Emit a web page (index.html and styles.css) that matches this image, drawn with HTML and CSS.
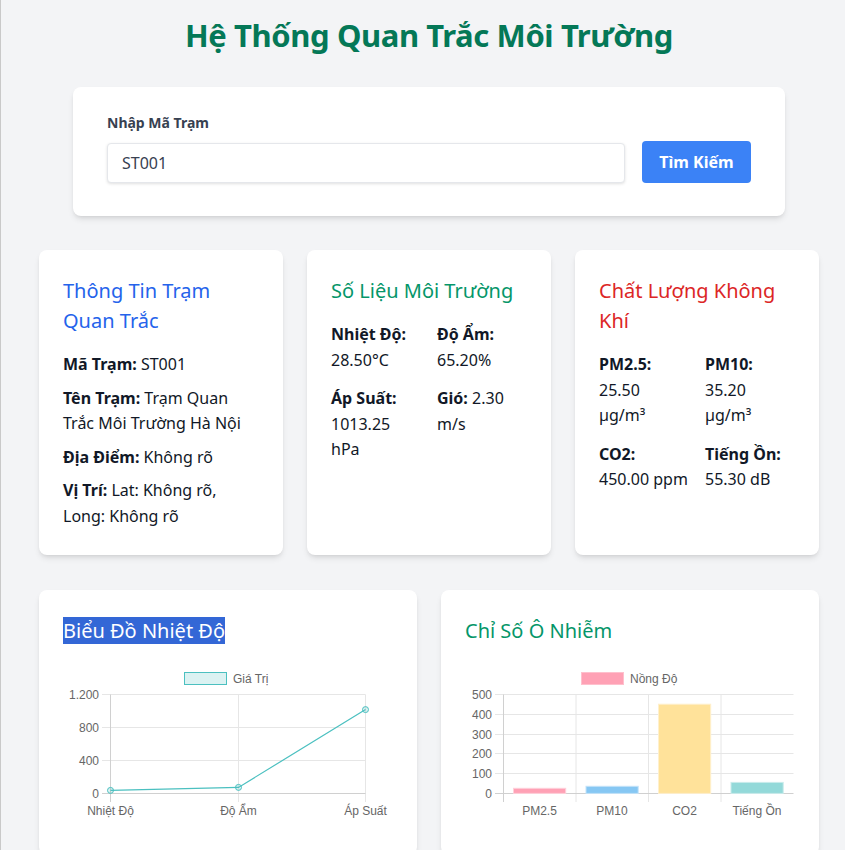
FILE: index.html
```html
<!DOCTYPE html>
<html lang="vi">
<head>
<meta charset="utf-8">
<title>Hệ Thống Quan Trắc Môi Trường</title>
<link rel="stylesheet" href="styles.css">
</head>
<body>
<main class="page">
  <h1 class="title">Hệ Thống Quan Trắc Môi Trường</h1>

  <section class="search-card">
    <div class="search-row">
      <div class="search-field">
        <label class="search-label" for="station">Nhập Mã Trạm</label>
        <input class="search-input" id="station" type="text" value="ST001">
      </div>
      <button class="search-btn" type="button">Tìm Kiếm</button>
    </div>
  </section>

  <section class="info-grid">
    <div class="card">
      <h2 class="card-title blue">Thông Tin Trạm Quan Trắc</h2>
      <div class="info-list">
        <p><b>Mã Trạm:</b> ST001</p>
        <p><b>Tên Trạm:</b> Trạm Quan Trắc Môi Trường Hà Nội</p>
        <p><b>Địa Điểm:</b> Không rõ</p>
        <p><b>Vị Trí:</b> Lat: Không rõ, Long: Không rõ</p>
      </div>
    </div>
    <div class="card">
      <h2 class="card-title green">Số Liệu Môi Trường</h2>
      <div class="metric-grid">
        <div><b>Nhiệt Độ:</b> 28.50°C</div>
        <div><b>Độ Ẩm:</b> 65.20%</div>
        <div><b>Áp Suất:</b> 1013.25 hPa</div>
        <div><b>Gió:</b> 2.30 m/s</div>
      </div>
    </div>
    <div class="card">
      <h2 class="card-title red">Chất Lượng Không Khí</h2>
      <div class="metric-grid">
        <div><b>PM2.5:</b> 25.50 µg/m³</div>
        <div><b>PM10:</b> 35.20 µg/m³</div>
        <div><b>CO2:</b> 450.00 ppm</div>
        <div><b>Tiếng Ồn:</b> 55.30 dB</div>
      </div>
    </div>
  </section>

  <section class="chart-grid">
    <div class="card">
      <h2 class="card-title chart-title"><span class="selected">Biểu Đồ Nhiệt Độ</span></h2>
      <svg class="chart" width="328" height="165" viewBox="0 0 328 165">
        <rect x="121.5" y="7.5" width="42" height="12" fill="rgba(75,192,192,0.2)" stroke="rgb(75,192,192)" stroke-width="1"/>
        <text class="lbl" x="170" y="17.5">Giá Trị</text>
        <g stroke="#e6e6e6" stroke-width="1">
          <line x1="39" y1="29.5" x2="302.5" y2="29.5"/>
          <line x1="39" y1="62.5" x2="302.5" y2="62.5"/>
          <line x1="39" y1="95.5" x2="302.5" y2="95.5"/>
          <line x1="175.5" y1="29.5" x2="175.5" y2="137"/>
          <line x1="302.5" y1="29.5" x2="302.5" y2="137"/>
        </g>
        <g stroke="#d0d0d0" stroke-width="1">
          <line x1="39" y1="128.5" x2="302.5" y2="128.5"/>
          <line x1="47.5" y1="29.5" x2="47.5" y2="137"/>
        </g>
        <g class="lbl" text-anchor="end">
          <text x="36" y="33.5">1.200</text>
          <text x="36" y="66.5">800</text>
          <text x="36" y="99.5">400</text>
          <text x="36" y="132.5">0</text>
        </g>
        <g class="lbl" text-anchor="middle">
          <text x="47.5" y="150">Nhiệt Độ</text>
          <text x="175.5" y="150">Độ Ẩm</text>
          <text x="302.5" y="150">Áp Suất</text>
        </g>
        <polyline points="47.5,125.4 175.5,122.4 302.5,44.6" fill="none" stroke="rgb(75,192,192)" stroke-width="1.2"/>
        <g fill="rgba(75,192,192,0.2)" stroke="rgb(75,192,192)" stroke-width="1">
          <circle cx="47.5" cy="125.4" r="3"/>
          <circle cx="175.5" cy="122.4" r="3"/>
          <circle cx="302.5" cy="44.6" r="3"/>
        </g>
      </svg>
    </div>
    <div class="card">
      <h2 class="card-title green chart-title">Chỉ Số Ô Nhiễm</h2>
      <svg class="chart" width="330" height="165" viewBox="0 0 330 165">
        <rect x="116.5" y="7.5" width="42" height="12" fill="#ffa1b5" stroke="#ffc0cd" stroke-width="1"/>
        <text class="lbl" x="165" y="17.5">Nồng Độ</text>
        <g stroke="#e6e6e6" stroke-width="1">
          <line x1="30" y1="29.5" x2="328.5" y2="29.5"/>
          <line x1="30" y1="49.5" x2="328.5" y2="49.5"/>
          <line x1="30" y1="69.5" x2="328.5" y2="69.5"/>
          <line x1="30" y1="88.5" x2="328.5" y2="88.5"/>
          <line x1="30" y1="108.5" x2="328.5" y2="108.5"/>
          <line x1="111" y1="29.5" x2="111" y2="137"/>
          <line x1="183.5" y1="29.5" x2="183.5" y2="137"/>
          <line x1="256" y1="29.5" x2="256" y2="137"/>
        </g>
        <g stroke="#d0d0d0" stroke-width="1">
          <line x1="30" y1="128.5" x2="328.5" y2="128.5"/>
          <line x1="38.5" y1="29.5" x2="38.5" y2="137"/>
        </g>
        <g class="lbl" text-anchor="end">
          <text x="27" y="33.5">500</text>
          <text x="27" y="53.5">400</text>
          <text x="27" y="73.5">300</text>
          <text x="27" y="92.5">200</text>
          <text x="27" y="112.5">100</text>
          <text x="27" y="132.5">0</text>
        </g>
        <rect x="48.5" y="123.3" width="52.2" height="5.1" fill="#ffa1b5" stroke="#ffd0da" stroke-width="1"/>
        <rect x="121" y="121.3" width="52.2" height="7.1" fill="#86c7f3" stroke="#c3e3f9" stroke-width="1"/>
        <rect x="193.5" y="39.2" width="52.2" height="89.2" fill="#ffe29a" stroke="#fff0cc" stroke-width="1"/>
        <rect x="266" y="117.4" width="52.2" height="11" fill="#93d9d9" stroke="#c9ecec" stroke-width="1"/>
        <g class="lbl" text-anchor="middle">
          <text x="74.5" y="150">PM2.5</text>
          <text x="147" y="150">PM10</text>
          <text x="219.5" y="150">CO2</text>
          <text x="292" y="150">Tiếng Ồn</text>
        </g>
      </svg>
    </div>
  </section>
</main>
</body>
</html>
```

FILE: styles.css
```css
html, body {
  margin: 0;
}

body {
  background: #f3f4f6;
  border-left: 1px solid #c9c9c9;
  min-height: 100vh;
  box-sizing: border-box;
  font-family: "Noto Sans", "Open Sans", sans-serif;
  color: #111827;
}

.page {
  padding: 15px 26px 0 38px;
}

.title {
  margin: 0 0 32px;
  text-align: center;
  font-size: 31px;
  letter-spacing: -0.4px;
  line-height: 40px;
  font-weight: 700;
  color: #047857;
}

.search-card {
  margin: 0 34px 34px;
  background: #fff;
  border-radius: 8px;
  box-shadow: 0 4px 6px -1px rgba(0, 0, 0, 0.1), 0 2px 4px -2px rgba(0, 0, 0, 0.1);
  padding: 26px 34px 33px;
}

.search-row {
  display: flex;
  align-items: flex-end;
  gap: 17px;
}

.search-field {
  flex: 1;
  display: flex;
  flex-direction: column;
}

.search-label {
  font-size: 14px;
  line-height: 20px;
  font-weight: 700;
  color: #374151;
  margin-bottom: 10px;
}

.search-input {
  height: 40px;
  box-sizing: border-box;
  border: 1px solid #e5e7eb;
  border-radius: 4px;
  box-shadow: 0 1px 3px rgba(0, 0, 0, 0.12);
  padding: 0 14px;
  font: 16px "Noto Sans", sans-serif;
  color: #374151;
  outline: none;
}

.search-btn {
  height: 42px;
  width: 109px;
  background: #3b82f6;
  color: #fff;
  border: 0;
  border-radius: 4px;
  font: 700 16px "Noto Sans", sans-serif;
}

.info-grid {
  display: grid;
  grid-template-columns: repeat(3, 1fr);
  gap: 24px;
  margin-bottom: 35px;
}

.chart-grid {
  display: grid;
  grid-template-columns: repeat(2, 1fr);
  gap: 24px;
}

.card {
  background: #fff;
  border-radius: 8px;
  box-shadow: 0 4px 6px -1px rgba(0, 0, 0, 0.1), 0 2px 4px -2px rgba(0, 0, 0, 0.1);
  padding: 26px 24px 25px;
}

.card-title {
  margin: 0 0 16px;
  font-size: 20px;
  line-height: 30px;
  font-weight: 400;
}

.chart-title {
  margin-bottom: 19px;
}

.blue { color: #2563eb; }
.green { color: #059669; }
.red { color: #dc2626; }

.selected {
  background: #3367d6;
  color: #fff;
}

.info-list p {
  margin: 0 0 8px;
  font-size: 16px;
  line-height: 25.6px;
}

.info-list p:last-child {
  margin-bottom: 0;
}

.metric-grid {
  display: grid;
  grid-template-columns: 1fr 1fr;
  gap: 13px 16px;
  font-size: 16px;
  line-height: 25.6px;
}

.chart {
  display: block;
}

.lbl {
  font-family: "Liberation Sans", Arial, sans-serif;
  font-size: 12px;
  fill: #666;
}
```
